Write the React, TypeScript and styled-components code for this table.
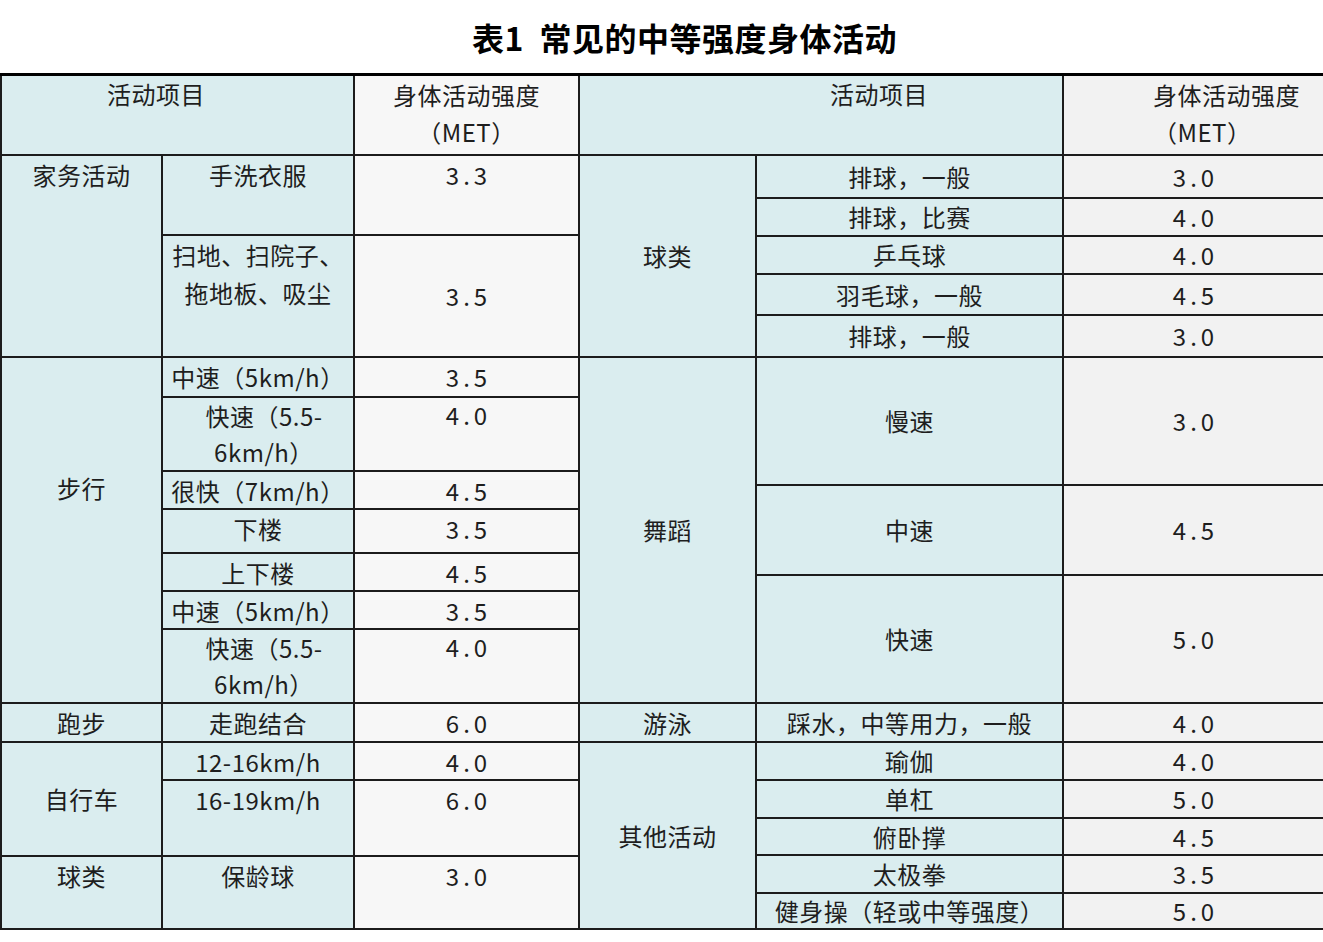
import React from "react";
import styled, { createGlobalStyle, css } from "styled-components";

const GlobalStyle = createGlobalStyle`
  html, body {
    margin: 0;
    padding: 0;
    background: #ffffff;
  }
  body {
    font-family: "Noto Sans CJK SC", "Noto Sans", sans-serif;
    color: #1e1e1e;
  }
`;

type Tone = "cyan" | "light" | "gray";

interface CellSpec {
  r: number;
  c: number;
  rs?: number;
  cs?: number;
  tone: Tone;
  text: React.ReactNode;
  v?: "top" | "center";
  num?: boolean;
  align?: "left" | "center";
  padL?: number;
  padR?: number;
  padT?: number;
  lh?: number;
}

const tones: Record<Tone, string> = {
  cyan: "#daedef",
  light: "#f7f7f7",
  gray: "#f2f2f2",
};

const Page = styled.div`
  width: 1323px;
`;

const Title = styled.h1`
  margin: 0;
  height: 73px;
  display: flex;
  align-items: center;
  justify-content: center;
  padding-left: 46px;
  box-sizing: border-box;
  font-size: 32px;
  font-weight: 700;
  color: #000;
  letter-spacing: 0.5px;
`;

const Table = styled.div`
  display: flex;
  gap: 2px;
  background: #1c1c1c;
  border-top: 3px solid #000;
  padding: 0 0 2px 2px;
`;

const Half = styled.div<{ $cols: number[]; $rows: number[] }>`
  display: grid;
  gap: 2px;
  grid-template-columns: ${(p) => p.$cols.map((c) => `${c}px`).join(" ")};
  grid-template-rows: ${(p) => p.$rows.map((r) => `${r}px`).join(" ")};
`;

const Cell = styled.div<{
  $r: number;
  $c: number;
  $rs: number;
  $cs: number;
  $tone: Tone;
  $v: "top" | "center";
  $num: boolean;
  $align: "left" | "center";
  $padL: number;
  $padR: number;
  $padT: number;
  $lh: number;
}>`
  grid-row: ${(p) => p.$r} / span ${(p) => p.$rs};
  grid-column: ${(p) => p.$c} / span ${(p) => p.$cs};
  background: ${(p) => tones[p.$tone]};
  display: flex;
  flex-direction: column;
  align-items: ${(p) => (p.$align === "left" ? "flex-start" : "center")};
  justify-content: ${(p) => (p.$v === "center" ? "center" : "flex-start")};
  padding: ${(p) => p.$padT}px ${(p) => p.$padR}px 0 ${(p) => p.$padL}px;
  box-sizing: border-box;
  text-align: ${(p) => p.$align};
  font-size: 24px;
  line-height: ${(p) => p.$lh}px;
  letter-spacing: 0.5px;
  white-space: nowrap;
  overflow: hidden;
  color: #1e1e1e;
  ${(p) =>
    p.$num &&
    css`
      letter-spacing: 4px;
      padding-left: ${p.$padL + 4}px;
    `}
`;

const Content = styled.span`
  display: block;
`;

const leftCols = [159, 190, 223];
const leftRows = [78, 78, 120, 38, 72, 36, 42, 36, 36, 72, 37, 36, 74, 71];
const rightCols = [175, 305, 259];
const rightRows = [78, 41, 36, 36, 39, 40, 126, 88, 126, 37, 36, 36, 35, 36, 34];

const header = (
  <>
    身体活动强度
    <br />
    （MET）
  </>
);

const fast = (
  <>
    快速（5.5-
    <br />
    6km/h）
  </>
);

const leftCells: CellSpec[] = [
  { r: 1, c: 1, cs: 2, tone: "cyan", text: "活动项目", padR: 43, lh: 36 },
  { r: 1, c: 3, tone: "light", text: header, lh: 37 },
  { r: 2, c: 1, rs: 2, tone: "cyan", text: "家务活动" },
  { r: 2, c: 2, tone: "cyan", text: "手洗衣服" },
  { r: 2, c: 3, tone: "light", text: "3.3", num: true },
  {
    r: 3,
    c: 2,
    tone: "cyan",
    text: (
      <>
        扫地、扫院子、
        <br />
        拖地板、吸尘
      </>
    ),
  },
  { r: 3, c: 3, tone: "light", text: "3.5", num: true, v: "center" },
  { r: 4, c: 1, rs: 7, tone: "cyan", text: "步行", padT: 111 },
  { r: 4, c: 2, tone: "cyan", text: "中速（5km/h）" },
  { r: 4, c: 3, tone: "light", text: "3.5", num: true },
  { r: 5, c: 2, tone: "cyan", text: fast, padL: 12, lh: 36 },
  { r: 5, c: 3, tone: "light", text: "4.0", num: true, lh: 34 },
  { r: 6, c: 2, tone: "cyan", text: "很快（7km/h）" },
  { r: 6, c: 3, tone: "light", text: "4.5", num: true },
  { r: 7, c: 2, tone: "cyan", text: "下楼" },
  { r: 7, c: 3, tone: "light", text: "3.5", num: true },
  { r: 8, c: 2, tone: "cyan", text: "上下楼" },
  { r: 8, c: 3, tone: "light", text: "4.5", num: true },
  { r: 9, c: 2, tone: "cyan", text: "中速（5km/h）" },
  { r: 9, c: 3, tone: "light", text: "3.5", num: true },
  { r: 10, c: 2, tone: "cyan", text: fast, padL: 12, lh: 36 },
  { r: 10, c: 3, tone: "light", text: "4.0", num: true, lh: 34 },
  { r: 11, c: 1, tone: "cyan", text: "跑步" },
  { r: 11, c: 2, tone: "cyan", text: "走跑结合" },
  { r: 11, c: 3, tone: "light", text: "6.0", num: true },
  { r: 12, c: 1, rs: 2, tone: "cyan", text: "自行车", v: "center" },
  { r: 12, c: 2, tone: "cyan", text: "12-16km/h" },
  { r: 12, c: 3, tone: "light", text: "4.0", num: true },
  { r: 13, c: 2, tone: "cyan", text: "16-19km/h" },
  { r: 13, c: 3, tone: "light", text: "6.0", num: true },
  { r: 14, c: 1, tone: "cyan", text: "球类" },
  { r: 14, c: 2, tone: "cyan", text: "保龄球" },
  { r: 14, c: 3, tone: "light", text: "3.0", num: true },
];

const pair = (r: number, label: string, value: string): CellSpec[] => [
  { r, c: 2, tone: "cyan", text: label, v: "center" },
  { r, c: 3, tone: "gray", text: value, num: true, v: "center" },
];

const rightCells: CellSpec[] = [
  { r: 1, c: 1, cs: 2, tone: "cyan", text: "活动项目", padL: 116, lh: 36 },
  { r: 1, c: 3, tone: "gray", text: header, align: "left", padL: 89, lh: 37 },
  { r: 2, c: 1, rs: 5, tone: "cyan", text: "球类", v: "center" },
  ...pair(2, "排球，一般", "3.0"),
  ...pair(3, "排球，比赛", "4.0"),
  ...pair(4, "乒乓球", "4.0"),
  ...pair(5, "羽毛球，一般", "4.5"),
  ...pair(6, "排球，一般", "3.0"),
  { r: 7, c: 1, rs: 3, tone: "cyan", text: "舞蹈", v: "center" },
  ...pair(7, "慢速", "3.0"),
  ...pair(8, "中速", "4.5"),
  ...pair(9, "快速", "5.0"),
  { r: 10, c: 1, tone: "cyan", text: "游泳", v: "center" },
  ...pair(10, "踩水，中等用力，一般", "4.0"),
  { r: 11, c: 1, rs: 5, tone: "cyan", text: "其他活动", v: "center" },
  ...pair(11, "瑜伽", "4.0"),
  ...pair(12, "单杠", "5.0"),
  ...pair(13, "俯卧撑", "4.5"),
  ...pair(14, "太极拳", "3.5"),
  ...pair(15, "健身操（轻或中等强度）", "5.0"),
];

const renderCells = (cells: CellSpec[]) =>
  cells.map((cell, i) => (
    <Cell
      key={i}
      $r={cell.r}
      $c={cell.c}
      $rs={cell.rs ?? 1}
      $cs={cell.cs ?? 1}
      $tone={cell.tone}
      $v={cell.v ?? "top"}
      $num={!!cell.num}
      $align={cell.align ?? "center"}
      $padL={cell.padL ?? 0}
      $padR={cell.padR ?? 0}
      $padT={cell.padT ?? 0}
      $lh={cell.lh ?? 38}
    >
      <Content>{cell.text}</Content>
    </Cell>
  ));

export default function App() {
  return (
    <Page>
      <GlobalStyle />
      <Title>表1&nbsp;&nbsp;常见的中等强度身体活动</Title>
      <Table>
        <Half $cols={leftCols} $rows={leftRows}>
          {renderCells(leftCells)}
        </Half>
        <Half $cols={rightCols} $rows={rightRows}>
          {renderCells(rightCells)}
        </Half>
      </Table>
    </Page>
  );
}
